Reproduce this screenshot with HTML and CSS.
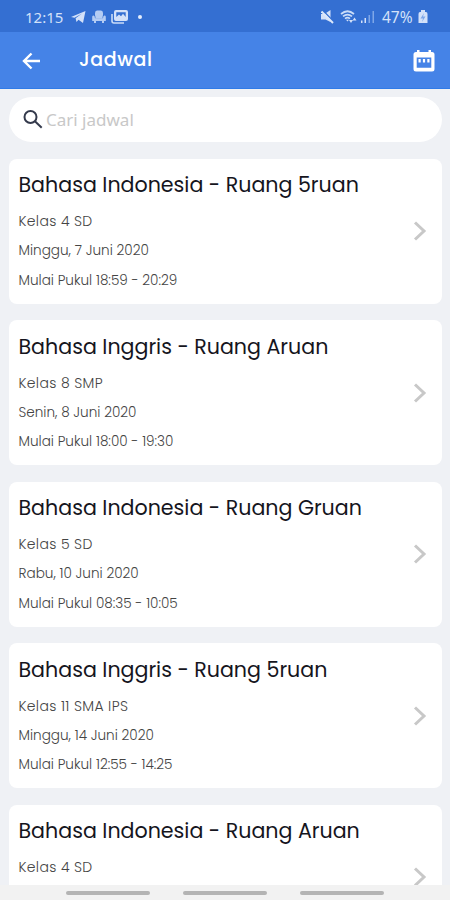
FILE: index.html
```
<!DOCTYPE html>
<html lang="id">
<head>
    <meta charset="UTF-8">
    <title>Jadwal</title>
    <link rel="stylesheet" href="styles.css">
</head>
<body>
<div class="status">
    <span class="time">12:15</span>
    <svg class="telegram" width="15" height="14" viewBox="0 0 15 14"><path d="M0 7L14.5 1L12 13L7.5 9.7L5.5 12L4.6 8.2L11 3.5L3.5 7.8Z"/></svg>
    <svg class="sofa" width="14" height="14" viewBox="0 0 14 14"><path d="M3 5V3Q3 .5 5 .5H9Q11 .5 11 3V5Q10.5 6 10.5 8.5H3.5Q3.5 6 3 5Z"/><path d="M1 5.5Q3 5 3 8.2H11Q11 5 13 5.5Q14 6 13.8 7.5V11H12V13H10V11H4V13H2V11H.2V7.5Q0 6 1 5.5Z"/></svg>
    <svg class="gallery" width="17" height="14" viewBox="0 0 17 14"><path d="M1 4V11Q1 13 3 13H13" fill="none" stroke="#c9dcf8" stroke-width="1.6"/><path fill-rule="evenodd" d="M5 0H15Q17 0 17 2V9Q17 11 15 11H5Q3 11 3 9V2Q3 0 5 0ZM5.3 2.2V7L8 4.5L10 6.2L12 3.8L14.7 7V2.2Z"/></svg>
    <span class="dot"></span>
    <svg class="mute" width="13" height="14" viewBox="0 0 13 14"><path d="M0 4H3.5L9.5 0V12L4.5 9.5H0Z"/><path d="M2 .5L13 12" stroke="#346fd2" stroke-width="1.4"/><path d="M.5 1.5L12 13" stroke="#dce8fb" stroke-width="1.9"/></svg>
    <svg class="wifi" width="17" height="14" viewBox="0 0 17 14"><path d="M1 4Q7.5-1.5 14 4M3 6.3Q7.5 2.8 12 6.3M5 8.6Q7.5 6.8 10 8.6" fill="none" stroke="#c9dcf8" stroke-width="1.7"/><path d="M6 9.8H9L7.5 11.5ZM9 10H13L11 13ZM12.5 10.5L14.5 7.5L16.5 10.5Z"/></svg>
    <svg class="signal" width="14" height="12" viewBox="0 0 14 12"><path d="M0 9.5H1.5V12H0ZM3.5 7H5V12H3.5Z"/><path class="weak" d="M7.5 4H9V12H7.5ZM11.5 0H13V12H11.5Z"/></svg>
    <span class="percent">47%</span>
    <svg class="battery" width="10" height="13" viewBox="0 0 10 13"><path d="M3 0H7V2H8Q9.5 2 9.5 4V13H.5V4Q.5 2 2 2H3Z"/><path d="M6 3L2.5 8.5H5L4 12L7.5 6.5H5Z" fill="#7fa7e8"/></svg>
</div>
<div class="header">
    <svg class="back" width="19" height="18" viewBox="0 0 19 18"><path d="M18 9H2M9.5 1.5L2 9L9.5 16.5"/></svg>
    <h1>Jadwal</h1>
    <svg class="calendar" width="22" height="22" viewBox="0 0 22 22"><path fill-rule="evenodd" d="M4 0H6.5V2H15.5V0H18V2H19Q21.5 2 21.5 4.5V19Q21.5 21.5 19 21.5H3Q.5 21.5 .5 19V4.5Q.5 2 3 2H4ZM3.7 7.5V17.7H18.3V7.5Z"/><path d="M5.5 9H7.7V12.5H5.5ZM9.9 9H12.1V12.5H9.9ZM14.3 9H16.5V12.5H14.3Z"/></svg>
</div>
<div class="content">
    <div class="search">
        <svg width="20" height="19" viewBox="0 0 20 19"><circle cx="7.5" cy="7" r="6"/><path d="M11.7 11L18.7 17.7"/></svg>
        <span>Cari jadwal</span>
    </div>
    <ul class="list">
        <li>
            <div class="info">
                <h2>Bahasa Indonesia - Ruang 5ruan</h2>
                <p class="kelas">Kelas 4 SD</p>
                <p>Minggu, 7 Juni 2020</p>
                <p>Mulai Pukul 18:59 - 20:29</p>
            </div>
            <svg class="arrow" width="14" height="20" viewBox="0 0 14 20"><path d="M2 1.5L11 10L2 18.5"/></svg>
        </li>
        <li>
            <div class="info">
                <h2>Bahasa Inggris - Ruang Aruan</h2>
                <p class="kelas">Kelas 8 SMP</p>
                <p>Senin, 8 Juni 2020</p>
                <p>Mulai Pukul 18:00 - 19:30</p>
            </div>
            <svg class="arrow" width="14" height="20" viewBox="0 0 14 20"><path d="M2 1.5L11 10L2 18.5"/></svg>
        </li>
        <li>
            <div class="info">
                <h2>Bahasa Indonesia - Ruang Gruan</h2>
                <p class="kelas">Kelas 5 SD</p>
                <p>Rabu, 10 Juni 2020</p>
                <p>Mulai Pukul 08:35 - 10:05</p>
            </div>
            <svg class="arrow" width="14" height="20" viewBox="0 0 14 20"><path d="M2 1.5L11 10L2 18.5"/></svg>
        </li>
        <li>
            <div class="info">
                <h2>Bahasa Inggris - Ruang 5ruan</h2>
                <p class="kelas">Kelas 11 SMA IPS</p>
                <p>Minggu, 14 Juni 2020</p>
                <p>Mulai Pukul 12:55 - 14:25</p>
            </div>
            <svg class="arrow" width="14" height="20" viewBox="0 0 14 20"><path d="M2 1.5L11 10L2 18.5"/></svg>
        </li>
        <li>
            <div class="info">
                <h2>Bahasa Indonesia - Ruang Aruan</h2>
                <p class="kelas">Kelas 4 SD</p>
            </div>
            <svg class="arrow" width="14" height="20" viewBox="0 0 14 20"><path d="M2 1.5L11 10L2 18.5"/></svg>
        </li>
    </ul>
</div>
<div class="navbar">
    <span></span>
    <span></span>
    <span></span>
</div>
</body>
</html>
```
FILE: styles.css
```
*{
    box-sizing: border-box;
}
body{
    margin: 0;
    height: 900px;
    display: flex;
    flex-direction: column;
    overflow: hidden;
    background-color: #eff1f5;
    font-family: Poppins, Inter, sans-serif;
}
svg{
    display: block;
    flex: none;
}
.status{
    flex: none;
    height: 32px;
    padding: 1px 22px 0 25px;
    display: flex;
    align-items: center;
    background-color: #346fd2;
    color: #d3e1f9;
    fill: #d3e1f9;
    font-family: "Noto Sans", sans-serif;
    font-size: 15px;
}
.time{
    width: 39px;
}
.telegram{
    margin-left: 7px;
}
.sofa{
    margin-left: 6px;
    fill: #b4ccf3;
}
.gallery{
    margin-left: 5px;
}
.dot{
    width: 4px;
    height: 4px;
    margin-left: 10px;
    border-radius: 2px;
    background-color: #e4edfc;
}
.mute{
    margin-left: auto;
}
.wifi{
    margin-left: 6px;
}
.signal{
    margin-left: 4px;
}
.weak{
    fill: #7fa7e8;
}
.percent{
    width: 33px;
    margin-left: 7px;
    font-size: 15.5px;
}
.battery{
    margin-left: 3px;
}
.header{
    flex: none;
    height: 57px;
    padding: 0 15px 0 22px;
    display: flex;
    align-items: center;
    background-color: #4583e7;
    border-bottom: 1px solid #2f7be8;
}
.back{
    fill: none;
    stroke: #fff;
    stroke-width: 2.4;
    margin-top: 1px;
}
h1{
    margin: 0 auto 2px 38px;
    color: #fff;
    font-size: 19px;
    font-weight: 500;
    letter-spacing: 0.6px;
}
.calendar{
    margin-top: 1px;
    fill: #fff;
}
.content{
    flex: 1;
    min-height: 0;
    overflow: hidden;
    padding: 8px 8.5px 0 9px;
}
.search{
    height: 45px;
    padding-left: 14px;
    display: flex;
    align-items: center;
    background-color: #fff;
    border-radius: 23px;
    color: #c8c8c8;
    font-family: "Noto Sans", sans-serif;
    font-size: 17px;
}
.search svg{
    margin: 0 3px 1px 0;
    fill: none;
    stroke: #343a4c;
    stroke-width: 2;
}
.list{
    margin: 16.5px 0 0;
    padding: 0;
    list-style: none;
}
.list li{
    height: 145px;
    margin-bottom: 16.5px;
    padding: 0 15px 0 9.5px;
    display: flex;
    align-items: center;
    background-color: #fff;
    border-radius: 8px;
}
.info{
    flex: 1;
    align-self: flex-start;
    padding-top: 11.5px;
    white-space: nowrap;
}
h2{
    margin: 0 0 7px;
    color: #15151d;
    font-size: 20.6px;
    line-height: 30px;
    font-weight: 400;
}
p{
    margin: 0;
    color: #444;
    font-size: 13.6px;
    line-height: 29.3px;
    font-weight: 300;
}
.kelas{
    font-size: 14px;
    letter-spacing: 0.35px;
}
.arrow{
    fill: none;
    stroke: #c8c8c8;
    stroke-width: 3;
}
.navbar{
    flex: none;
    height: 15px;
    display: flex;
    justify-content: center;
    align-items: center;
    gap: 33px;
    background-color: #f2f2f2;
}
.navbar span{
    width: 84px;
    height: 4px;
    border-radius: 2px;
    background-color: #b4b4b4;
}
```
